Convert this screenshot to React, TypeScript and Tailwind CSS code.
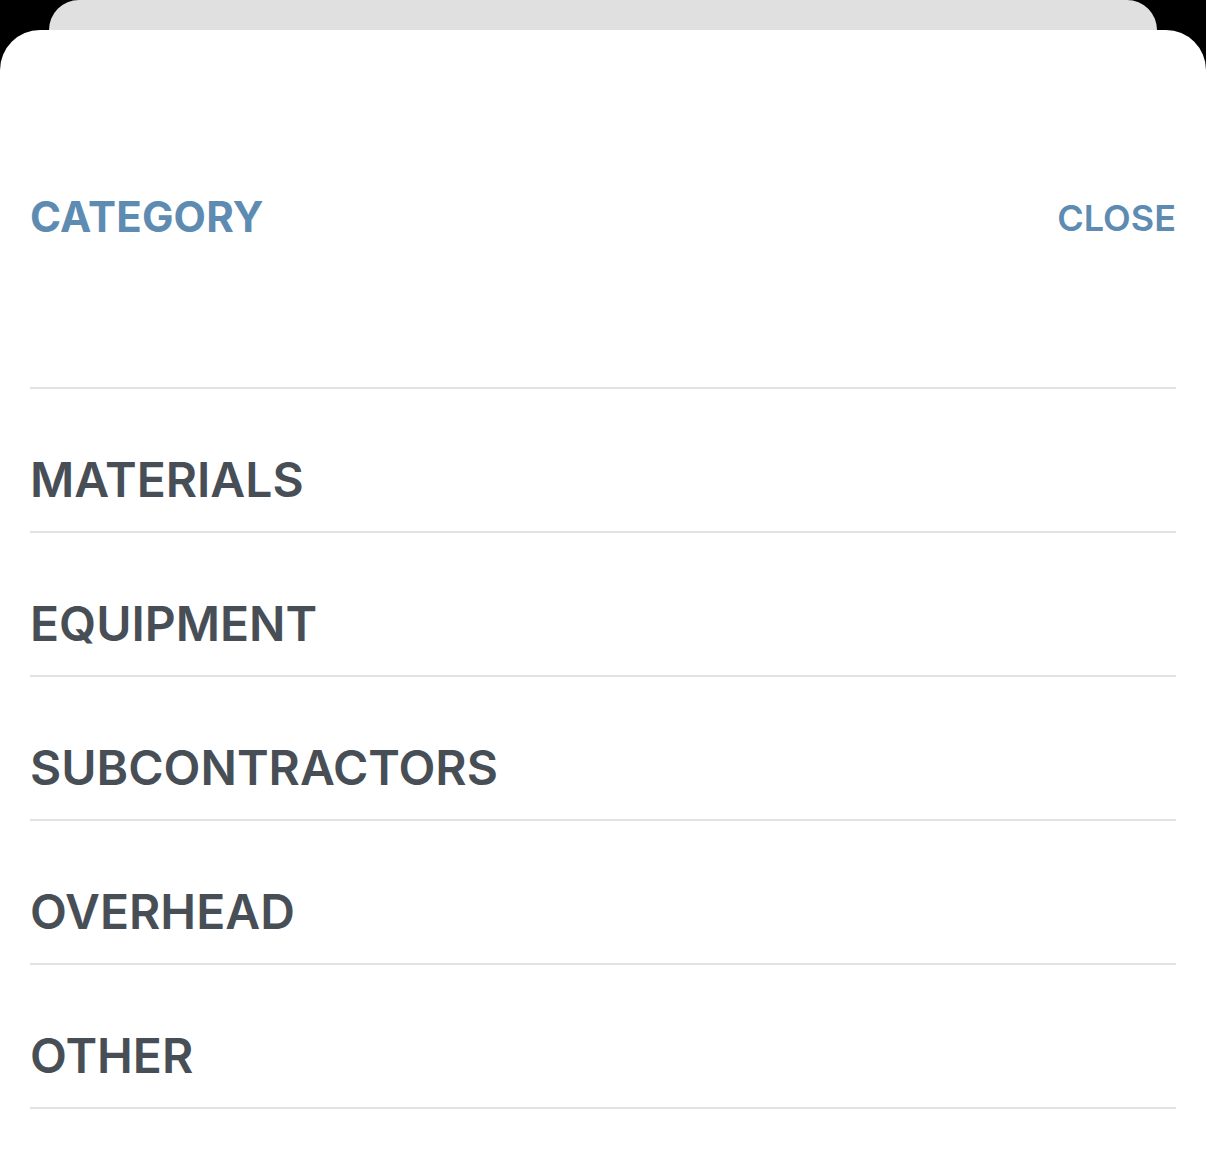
const CATEGORIES = ["MATERIALS", "EQUIPMENT", "SUBCONTRACTORS", "OVERHEAD", "OTHER"];

export default function App() {
  return (
    <div
      className="flex h-[1169px] w-full flex-col overflow-hidden bg-black"
      style={{ fontFamily: "Inter, 'Noto Sans', sans-serif" }}
    >
      {/* card stacked behind the sheet */}
      <div className="mx-[49px] h-[30px] shrink-0 rounded-t-[32px] bg-[#e0e0e0]" />

      {/* sheet */}
      <div className="flex-1 rounded-t-[40px] bg-white px-[30px]">
        <div className="flex h-[357px] items-start justify-between pt-[166px]">
          <h1 className="text-[42px] leading-[42px] font-bold tracking-[0.2px] text-[#5e8bb1]">
            CATEGORY
          </h1>
          <button className="mt-[4px] text-[36px] leading-[36px] font-semibold text-[#5e8bb1]">
            CLOSE
          </button>
        </div>

        <ul className="border-t-2 border-[#e2e2e2]">
          {CATEGORIES.map((c) => (
            <li
              key={c}
              className="border-b-2 border-[#e2e2e2] pt-[67px] pb-[27px] text-[48px] leading-[48px] font-semibold text-[#474e56]"
            >
              {c}
            </li>
          ))}
        </ul>
      </div>
    </div>
  );
}
